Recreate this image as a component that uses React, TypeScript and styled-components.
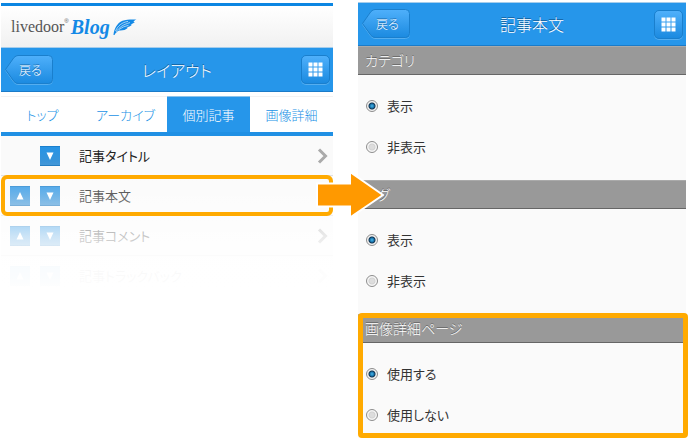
import React from "react";
import styled, { createGlobalStyle, css } from "styled-components";

const GlobalStyle = createGlobalStyle`
  * { box-sizing: border-box; }
  body {
    margin: 0;
    background: #fff;
    color: #333;
    font: 13px/20px "Noto Sans CJK JP", sans-serif;
    font-weight: 300;
    font-feature-settings: "palt";
  }
  button, input { font: inherit; font-feature-settings: inherit; margin: 0; padding: 0; }
  button { border: 0; background: none; cursor: pointer; }
`;

const Page = styled.main`
  display: grid;
  grid-template-columns: 332fr 328fr;
  gap: 25px;
  align-items: start;
  padding: 2px 3px 0 1px;
`;

const LeftPanel = styled.section`
  padding-top: 1px;
`;

const RightPanel = styled.section`
  background: #fafafa;
`;

const Brand = styled.div`
  display: flex;
  align-items: center;
  height: 44px;
  padding: 1px 10px 0;
  border-top: 3px solid #0b86e2;
  box-shadow: inset 0 1px #fff;
  background: linear-gradient(#fff, #f1f1f1);
`;

const BrandLink = styled.a`
  display: flex;
  align-items: center;
  color: #555;
  text-decoration: none;
`;

const BrandName = styled.span`
  font: 16px/24px "Liberation Serif", serif;
`;

const BrandMark = styled.sup`
  align-self: flex-start;
  padding-right: 2px;
  font: 6px/12px "Liberation Sans", sans-serif;
`;

const BrandBlog = styled.span`
  padding-right: 3px;
  font: italic bold 20px/24px "Liberation Serif", serif;
  color: #1389e6;
`;

const Bar = styled.header<{ $compact?: boolean }>`
  display: flex;
  align-items: center;
  justify-content: space-between;
  height: ${(p) => (p.$compact ? 44 : 45)}px;
  padding: 0 3px;
  border-top: 1px solid #a5cdec;
  border-bottom: 1px solid #1b7bc8;
  background: #2696ea;
`;

const BarTitle = styled.h1`
  margin: 0;
  font-size: 16px;
  line-height: 24px;
  font-weight: 300;
  color: #fff;
  text-shadow: 0 -1px #14609f;
`;

const BackButton = styled.button`
  display: grid;
  width: 49px;
  height: 30px;
  color: #fff;
  font-size: 12px;
  text-shadow: 0 -1px #1a6cb0;
  & > * { grid-area: 1 / 1; }
`;

const BackLabel = styled.span`
  align-self: center;
  padding-left: 4px;
`;

const GridButton = styled.button`
  display: grid;
  place-items: center;
  width: 29px;
  height: 29px;
  border: 1px solid #1a7fcd;
  border-radius: 5px;
  box-shadow: 0 1px #55aef0;
  background: linear-gradient(#4fb0fb, #1b8ae0);
`;

const Tabs = styled.nav`
  display: grid;
  grid-template-columns: repeat(4, 1fr);
  margin-top: 4px;
  border-bottom: 4px solid #2090e4;
`;

const Tab = styled.a<{ $active?: boolean }>`
  display: flex;
  align-items: center;
  justify-content: center;
  height: 36px;
  border-top: 1px solid #f3f3f3;
  color: #2292e6;
  text-decoration: none;
  ${(p) =>
    p.$active &&
    css`
      color: #fff;
      background: #2696ea;
      border-top-color: #8cc2ec;
    `}
`;

const List = styled.ul`
  position: relative;
  margin: 0;
  padding: 0;
  list-style: none;
  &::after {
    content: "";
    position: absolute;
    inset: 0;
    z-index: 1;
    pointer-events: none;
    background: linear-gradient(
      rgba(255, 255, 255, 0) 25px,
      rgba(255, 255, 255, 0.3) 60px,
      rgba(255, 255, 255, 0.75) 100px,
      rgba(255, 255, 255, 0.97) 130px,
      rgba(255, 255, 255, 0.98) 145px,
      #fff 155px
    );
  }
`;

const Row = styled.li<{ $selected?: boolean }>`
  position: relative;
  display: grid;
  grid-template-columns: 20px 20px 1fr 12px;
  column-gap: 10px;
  align-items: center;
  height: 40px;
  padding: 0 4px 0 9px;
  border-bottom: 1px solid #ddd;
  background: #fafafa;
  ${(p) =>
    p.$selected &&
    css`
      &::before {
        content: "";
        position: absolute;
        inset: -1px 0 -1px;
        z-index: 2;
        border: 4px solid #fa0;
        border-radius: 6px;
        pointer-events: none;
      }
    `}
`;

const RowLabel = styled.span`
  padding-left: 9px;
  color: #222;
  font-weight: 400;
  white-space: nowrap;
`;

const MoveButton = styled.button`
  display: grid;
  place-items: center;
  width: 20px;
  height: 20px;
  border-top: 1px solid #1b80cd;
  border-bottom: 1px solid #1b78c0;
  background: linear-gradient(#2794e5, #3d94d6);
`;

const Arrow = styled.svg`
  position: absolute;
  right: -51px;
  top: -5px;
  z-index: 3;
`;

const Group = styled.section<{ $highlighted?: boolean }>`
  position: relative;
  padding-bottom: 13px;
  ${(p) =>
    p.$highlighted &&
    css`
      padding-bottom: 3px;
      &::after {
        content: "";
        position: absolute;
        inset: -1px -2px 0 0;
        border: 5px solid #fa0;
        border-radius: 4px;
        pointer-events: none;
      }
    `}
`;

const GroupTitle = styled.h2`
  height: 29px;
  margin: 0 0 10px;
  padding: 0 7px;
  border-top: 1px solid #aaa;
  border-bottom: 1px solid #666;
  background: #999;
  color: #fff;
  font-size: 14px;
  font-weight: 300;
  line-height: 26px;
  text-shadow: 0 -1px #666;
`;

const Option = styled.label`
  display: flex;
  align-items: center;
  gap: 9px;
  height: 41px;
  padding-left: 8px;
  font-weight: 400;
`;

const Radio = styled.input`
  appearance: none;
  width: 12px;
  height: 12px;
  border: 1px solid #8d8d8d;
  border-radius: 50%;
  background: radial-gradient(circle, #ddd 2px, #d2d2d2 3px, #f6f6f6 4px);
  &:checked {
    background: radial-gradient(circle at 50% 50%, #4cb8e8 0, #1674ae 2px, #12334f 3px, #f2f2f2 4px);
  }
`;

const Back = () => (
  <BackButton type="button">
    <svg width="49" height="30" viewBox="0 0 49 30" aria-hidden="true">
      <defs>
        <linearGradient id="back-fill" x1="0" y1="0" x2="0" y2="1">
          <stop offset="0" stopColor="#4fb0fb" />
          <stop offset="1" stopColor="#1b8ae0" />
        </linearGradient>
      </defs>
      <path d="M1.5 15.5 10 3.5Q12 1.5 14 1.5H44.5Q48.5 1.5 48.5 5.5V25.5Q48.5 29.5 44.5 29.5H14Q12 29.5 10 27.5Z" fill="none" stroke="#55aef0" />
      <path d="M1.5 14.5 10 2.5Q12 .5 14 .5H44.5Q48.5 .5 48.5 4.5V24.5Q48.5 28.5 44.5 28.5H14Q12 28.5 10 26.5Z" fill="url(#back-fill)" stroke="#1a7fcd" />
    </svg>
    <BackLabel>戻る</BackLabel>
  </BackButton>
);

const Menu = () => (
  <GridButton type="button" aria-label="メニュー">
    <svg width="15" height="15" viewBox="0 0 15 15" fill="#fff" aria-hidden="true">
      {[0, 5, 10].flatMap((y) =>
        [0, 5, 10].map((x) => <rect key={`${x}-${y}`} x={x + 0.5} y={y + 0.5} width="4" height="4" />)
      )}
    </svg>
  </GridButton>
);

const Move = ({ up }: { up?: boolean }) => (
  <MoveButton type="button" aria-label={up ? "上へ" : "下へ"}>
    <svg width="8" height="8" viewBox="0 0 8 8" fill="#fff" aria-hidden="true">
      <path d={up ? "M4 0 7.5 7.5H.5Z" : "M.5 .5H7.5L4 8Z"} />
    </svg>
  </MoveButton>
);

const Chevron = () => (
  <svg width="12" height="16" viewBox="0 0 12 16" fill="none" stroke="#aaa" strokeWidth="3" aria-hidden="true">
    <path d="M2 1.5 8.5 8 2 14.5" />
  </svg>
);

const Feather = () => (
  <svg width="24" height="17" viewBox="0 0 24 17" aria-hidden="true">
    <path d="M.5 16C1 10 4 4 9.500 1.800 13 .3 19 .4 23.500 .5 21.500 1.300 21 2 20.500 3L22 3C20.500 4.300 19 5 17.500 5.400L19 5.800C17.500 7.500 15.500 8 13.500 8.200L15 8.800C12.500 11.300 9.500 11.700 6 11.500 4 12.500 2.500 14 1.500 16Z" fill="#1389e6" />
    <path d="M3 13C6 8.500 10 5.500 17 3.600M2.500 12C5 6.500 9 3.500 15 2.400M6 10.500Q10 7.500 15.500 6.300" fill="none" stroke="#fff" strokeWidth=".6" />
  </svg>
);

const tabs = ["トップ", "アーカイブ", "個別記事", "画像詳細"];
const rows = ["記事タイトル", "記事本文", "記事コメント", "記事トラックバック"];
const groups = [
  { title: "カテゴリ", options: ["表示", "非表示"] },
  { title: "タグ", options: ["表示", "非表示"] },
  { title: "画像詳細ページ", options: ["使用する", "使用しない"] },
];

export default function App() {
  return (
    <>
      <GlobalStyle />
      <Page>
        <LeftPanel>
          <Brand>
            <BrandLink href="#">
              <BrandName>livedoor</BrandName>
              <BrandMark>®</BrandMark>
              <BrandBlog>Blog</BrandBlog>
              <Feather />
            </BrandLink>
          </Brand>
          <Bar>
            <Back />
            <BarTitle>レイアウト</BarTitle>
            <Menu />
          </Bar>
          <Tabs>
            {tabs.map((t, i) => (
              <Tab key={t} href="#" $active={i === 2}>{t}</Tab>
            ))}
          </Tabs>
          <List>
            {rows.map((label, i) => (
              <Row key={label} $selected={i === 1}>
                {i > 0 ? <Move up /> : <span />}
                <Move />
                <RowLabel>{label}</RowLabel>
                {i !== 1 && <Chevron />}
                {i === 1 && (
                  <Arrow width="68" height="48" viewBox="0 0 68 48" aria-hidden="true">
                    <path d="M1 12.5H34V1L67 24 34 46.5V35.5H1Z" fill="#f90" stroke="#fff" strokeWidth="2" />
                  </Arrow>
                )}
              </Row>
            ))}
          </List>
        </LeftPanel>
        <RightPanel>
          <Bar $compact>
            <Back />
            <BarTitle>記事本文</BarTitle>
            <Menu />
          </Bar>
          {groups.map((g, gi) => (
            <Group key={g.title} $highlighted={gi === 2} role="radiogroup" aria-labelledby={`title-${gi}`}>
              <GroupTitle id={`title-${gi}`}>{g.title}</GroupTitle>
              {g.options.map((o, oi) => (
                <Option key={o}>
                  <Radio type="radio" name={`group-${gi}`} defaultChecked={oi === 0} />
                  {o}
                </Option>
              ))}
            </Group>
          ))}
        </RightPanel>
      </Page>
    </>
  );
}
